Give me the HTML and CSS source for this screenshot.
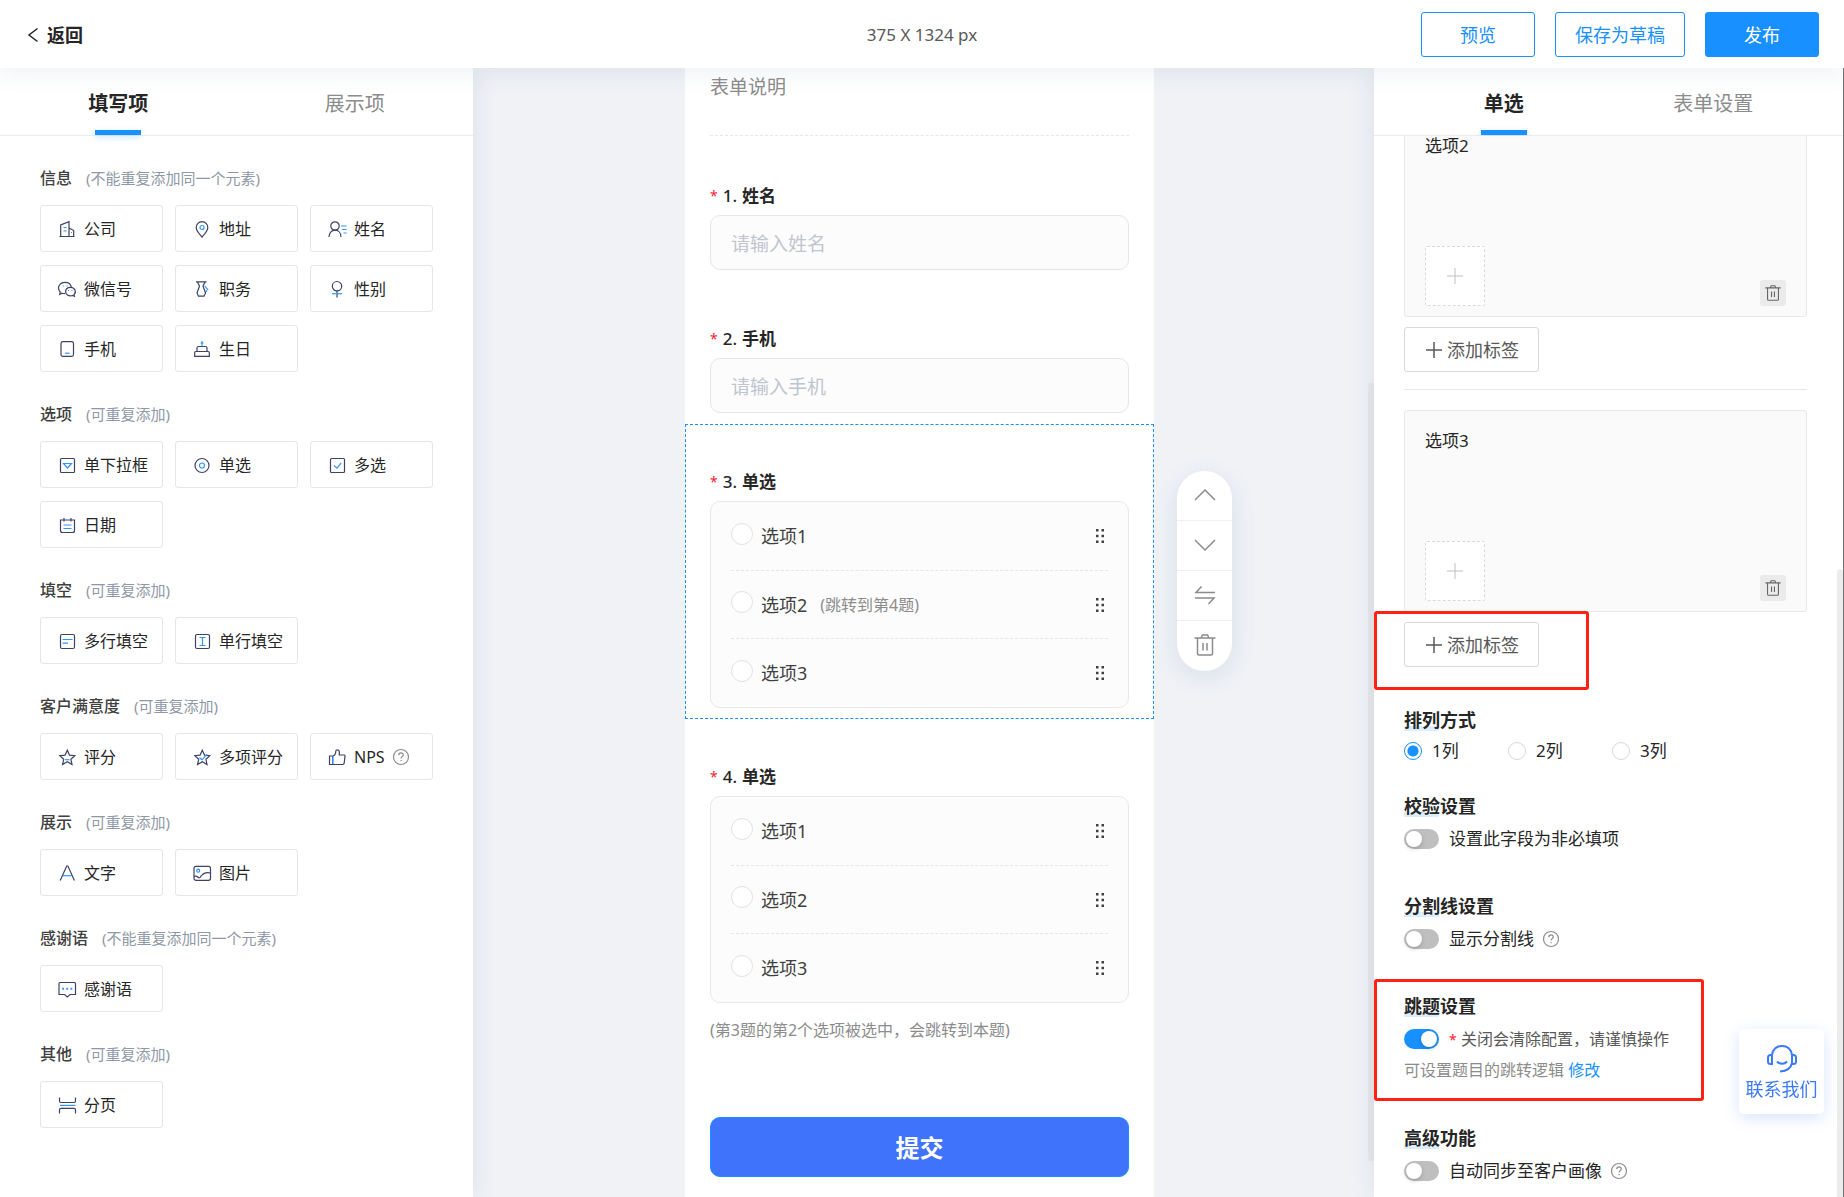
FILE: index.html
```html
<!DOCTYPE html>
<html lang="zh-CN">
<head>
<meta charset="utf-8">
<meta name="viewport" content="width=device-width, initial-scale=1">
<title>表单编辑</title>
<link rel="stylesheet" href="styles.css">
</head>
<body>
<svg class="sprite" aria-hidden="true">
  <symbol id="i-plus" viewBox="0 0 20 20"><path d="M10 2v16M2 10h16"/></symbol>
  <symbol id="i-help" viewBox="0 0 18 18"><circle cx="9" cy="9" r="7.5"/><path d="M6.8 7.2c0-3 4.5-2.900 4.500-.2 0 1.500-2.200 1.600-2.200 3.400M9.100 12v1.300"/></symbol>
  <symbol id="i-grip" viewBox="0 0 10 16"><path d="M1 1h2.500v2.500H1zM6.500 1H9v2.500H6.500zM1 6.800h2.500v2.500H1zM6.500 6.800H9v2.500H6.500zM1 12.500h2.500V15H1zM6.500 12.500H9V15H6.500z"/></symbol>
  <symbol id="i-trash" viewBox="0 0 22 24"><path d="M.5 5h21M7 5l1.500-3h5L15 5M3.500 5v15.500q0 1.500 1.500 1.500h12q1.500 0 1.500-1.500V5M9 10v7.500M13 10v7.500"/></symbol>
</svg>

<header class="topbar">
  <a class="back" href="#"><svg class="back-icon" viewBox="0 0 12 16"><path d="M10.500 1.500L2 8l8.500 6.500"/></svg>返回</a>
  <span class="canvas-size">375 X 1324 px</span>
  <div class="actions">
    <button class="btn" type="button">预览</button>
    <button class="btn" type="button">保存为草稿</button>
    <button class="btn btn-primary" type="button">发布</button>
  </div>
</header>

<main class="editor">
  <aside class="panel palette">
    <nav class="tabs">
      <button class="tab active" type="button">填写项</button>
      <button class="tab" type="button">展示项</button>
    </nav>
    <div class="groups">
      <section class="group">
        <h2 class="group-title">信息<small>(不能重复添加同一个元素)</small></h2>
        <div class="items">
          <button class="item" type="button"><svg class="icon" viewBox="0 0 20 20"><path d="M2.500 17.500h15M3.700 17.500V6L12 2.700v14.800M12 9l4.700 2.500v6"/><path class="b" d="M6.500 8.500h3M6.500 12h3M14 13.500h1"/></svg>公司</button>
          <button class="item" type="button"><svg class="icon" viewBox="0 0 20 20"><path d="M10 18C7 14.500 4.200 12 4.200 8.500a5.800 5.800 0 0 1 11.600 0C15.800 12 13 14.500 10 18z"/><circle class="b" cx="10" cy="8.500" r="2"/></svg>地址</button>
          <button class="item" type="button"><svg class="icon" viewBox="0 0 20 20"><circle cx="8" cy="7" r="4.200"/><path d="M2 18c0-4 2.500-6.800 6-6.800s6 2.800 6 6.800"/><path class="b" d="M14 7h5.500M15 10.500h4.500M16.500 14h3"/></svg>姓名</button>
          <button class="item" type="button"><svg class="icon" viewBox="0 0 20 20"><path d="M8 14.500c-1 .1-2 0-3-.3l-2.300 1.200.5-2.500C-.8 8.500 3 3.300 8 3.300c3.400 0 5.800 2.100 6.400 4.800"/><path d="M17 15.700l.4 1.600-1.800-.8c-4.500 1.300-7-1.400-7-4 0-2.300 2-4.200 4.700-4.200 4.800 0 6.400 4.700 3.700 7.400z"/><path class="b" d="M5.500 7h1.200M9.500 7h1.200M11 11.500h1M14.500 11.500h1"/></svg>微信号</button>
          <button class="item" type="button"><svg class="icon" viewBox="0 0 20 20"><path d="M4 2.800h10.500M5.500 3l2 4L5 14l1.500 3.200h5.500l1.500-3.200L11 7l2-4"/><path class="b" d="M12.500 7c1.500.5 1.800 2.500 3.700 4M13.800 11l1 2"/></svg>职务</button>
          <button class="item" type="button"><svg class="icon" viewBox="0 0 20 20"><circle cx="10" cy="7.200" r="4.700"/><path d="M10 12v6.500"/><path class="b" d="M5 14.700h10"/></svg>性别</button>
          <button class="item" type="button"><svg class="icon" viewBox="0 0 20 20"><rect x="4" y="2.700" width="12.500" height="14.600" rx="1.800"/><path class="b" d="M8 14.200h4.500"/></svg>手机</button>
          <button class="item" type="button"><svg class="icon" viewBox="0 0 20 20"><path d="M3.700 12.500h12.600q1 0 1 1v3.800H2.700v-3.800q0-1 1-1zM5 12.500V9q0-1.500 1.500-1.500h7Q15 7.500 15 9v3.500"/><path class="b" d="M10 2v5.500M8.700 4.200h2.600"/></svg>生日</button>
        </div>
      </section>
      <section class="group">
        <h2 class="group-title">选项<small>(可重复添加)</small></h2>
        <div class="items">
          <button class="item" type="button"><svg class="icon" viewBox="0 0 20 20"><rect x="3.500" y="3.500" width="14" height="14" rx="1"/><path class="b" d="M6.500 8.500h8l-4 4.500z"/></svg>单下拉框</button>
          <button class="item" type="button"><svg class="icon" viewBox="0 0 20 20"><circle cx="10" cy="10.500" r="7"/><circle class="b" cx="10" cy="10.500" r="2.500"/></svg>单选</button>
          <button class="item" type="button"><svg class="icon" viewBox="0 0 20 20"><rect x="3.500" y="3.500" width="14" height="14" rx="1"/><path class="b" d="M7 10.500l3 2.700 4.200-5.400"/></svg>多选</button>
          <button class="item" type="button"><svg class="icon" viewBox="0 0 20 20"><path d="M3.500 5h14v10.500q0 2-2 2h-10q-2 0-2-2zM7 3v3.500M14 3v3.500"/><path class="b" d="M6.500 10h8M6.500 13.500h8"/></svg>日期</button>
        </div>
      </section>
      <section class="group">
        <h2 class="group-title">填空<small>(可重复添加)</small></h2>
        <div class="items">
          <button class="item" type="button"><svg class="icon" viewBox="0 0 20 20"><rect x="3.500" y="3.500" width="14" height="14" rx="1.500"/><path class="b" d="M5.500 8.500h10M5.500 12.200h5.500"/></svg>多行填空</button>
          <button class="item" type="button"><svg class="icon" viewBox="0 0 20 20"><rect x="3.500" y="3.500" width="14" height="14" rx="1.500"/><path class="b" d="M7.500 6.500h6M7.500 14.500h6M10.500 6.500v8"/></svg>单行填空</button>
        </div>
      </section>
      <section class="group">
        <h2 class="group-title">客户满意度<small>(可重复添加)</small></h2>
        <div class="items">
          <button class="item" type="button"><svg class="icon" viewBox="0 0 20 20"><path d="M10.300 3.200l2.200 4.900 5.300.6-3.900 3.600 1.100 5.200-4.700-2.700-4.700 2.700 1.100-5.200-3.900-3.600 5.300-.6z"/><path class="b" d="M8 12.700h4.500"/></svg>评分</button>
          <button class="item" type="button"><svg class="icon" viewBox="0 0 20 20"><path d="M10.300 3.200l2.200 4.900 5.300.6-3.900 3.600 1.100 5.200-4.700-2.700-4.700 2.700 1.100-5.200-3.900-3.600 5.300-.6z"/><path class="b" d="M7.500 10.500l2.500 2.300 5-5.500"/></svg>多项评分</button>
          <button class="item" type="button"><svg class="icon" viewBox="0 0 20 20"><path d="M2.500 9h3.200v8.500H2.500zM5.700 9c2.300-.5 3-2.800 3.100-4.500 0-2.500 3.400-2.200 3.600.5l-.2 3h4.800q1.200 0 1 1.200l-.8 7q-.2 1.300-1.500 1.300h-10"/><path class="b" d="M5.700 9.500v7.500"/></svg>NPS<svg class="help" viewBox="0 0 18 18"><use href="#i-help"/></svg></button>
        </div>
      </section>
      <section class="group">
        <h2 class="group-title">展示<small>(可重复添加)</small></h2>
        <div class="items">
          <button class="item" type="button"><svg class="icon" viewBox="0 0 20 20"><path d="M3.200 17.500L9.700 3h1.200l6.500 14.500"/><path class="b" d="M5.800 12.700h9"/></svg>文字</button>
          <button class="item" type="button"><svg class="icon" viewBox="0 0 20 20"><rect x="2" y="3.300" width="16.500" height="14" rx="2"/><path d="M2 13.500c4-2 3.500 2.500 6 1 1.500-2.500 4-6 10.500-4.500"/><circle class="b" cx="6.200" cy="7.700" r="1.500"/></svg>图片</button>
        </div>
      </section>
      <section class="group">
        <h2 class="group-title">感谢语<small>(不能重复添加同一个元素)</small></h2>
        <div class="items">
          <button class="item" type="button"><svg class="icon" viewBox="0 0 20 20"><path d="M3 3.500h14.500q1 0 1 1v11h-5.500l-2.700 2.500-2.700-2.500H2v-11q0-1 1-1z"/><path class="b dots" d="M5.200 9.800h1.800M9.300 9.800h1.800M13.500 9.800h1.800"/></svg>感谢语</button>
        </div>
      </section>
      <section class="group">
        <h2 class="group-title">其他<small>(可重复添加)</small></h2>
        <div class="items">
          <button class="item" type="button"><svg class="icon" viewBox="0 0 20 20"><path d="M2.500 2.500V6q0 1.500 1.500 1.500h13q1.500 0 1.500-1.500V2.500M2.500 18.500v-3.700q0-1.500 1.500-1.500h13q1.500 0 1.500 1.500v3.700"/><path class="b" d="M3 10.400h15.500"/></svg>分页</button>
        </div>
      </section>
    </div>
  </aside>

  <section class="canvas">
    <form class="phone">
      <p class="form-desc">表单说明</p>
      <div class="question">
        <label class="q-title" for="q1"><i>*</i><b>1.</b>姓名</label>
        <input class="text-input" id="q1" type="text" placeholder="请输入姓名">
      </div>
      <div class="question">
        <label class="q-title" for="q2"><i>*</i><b>2.</b>手机</label>
        <input class="text-input" id="q2" type="text" placeholder="请输入手机">
      </div>
      <div class="question selected">
        <div class="q-title"><i>*</i><b>3.</b>单选</div>
        <div class="options">
          <div class="option"><label><input type="radio" name="q3">选项1</label><svg class="grip"><use href="#i-grip"/></svg></div>
          <div class="option"><label><input type="radio" name="q3">选项2 <small>(跳转到第4题)</small></label><svg class="grip"><use href="#i-grip"/></svg></div>
          <div class="option"><label><input type="radio" name="q3">选项3</label><svg class="grip"><use href="#i-grip"/></svg></div>
        </div>
        <div class="toolbar">
          <button type="button" aria-label="上移"><svg viewBox="0 0 24 24"><path d="M2 17L12 7l10 10"/></svg></button>
          <button type="button" aria-label="下移"><svg viewBox="0 0 24 24"><path d="M2 7l10 10L22 7"/></svg></button>
          <button type="button" aria-label="替换"><svg viewBox="0 0 24 24"><path d="M8.500 3.500L3 9.500h19M2 15h19l-5.500 6"/></svg></button>
          <button type="button" aria-label="删除"><svg viewBox="0 0 24 24"><use href="#i-trash"/></svg></button>
        </div>
      </div>
      <div class="question">
        <div class="q-title"><i>*</i><b>4.</b>单选</div>
        <div class="options">
          <div class="option"><label><input type="radio" name="q4">选项1</label><svg class="grip"><use href="#i-grip"/></svg></div>
          <div class="option"><label><input type="radio" name="q4">选项2</label><svg class="grip"><use href="#i-grip"/></svg></div>
          <div class="option"><label><input type="radio" name="q4">选项3</label><svg class="grip"><use href="#i-grip"/></svg></div>
        </div>
        <p class="q-note">(第3题的第2个选项被选中，会跳转到本题)</p>
      </div>
      <button class="submit" type="button">提交</button>
    </form>
    <span class="canvas-scroll"></span>
  </section>

  <aside class="panel settings">
    <nav class="tabs">
      <button class="tab active" type="button">单选</button>
      <button class="tab" type="button">表单设置</button>
    </nav>
    <div class="settings-view">
      <div class="settings-body">
        <div class="choice">
          <textarea aria-label="选项2">选项2</textarea>
          <div class="choice-foot">
            <button class="upload" type="button" aria-label="添加图片"><svg><use href="#i-plus"/></svg></button>
            <button class="remove" type="button" aria-label="删除选项"><svg><use href="#i-trash"/></svg></button>
          </div>
        </div>
        <div class="tag-row"><button class="add-tag" type="button"><svg><use href="#i-plus"/></svg>添加标签</button></div>
        <hr>
        <div class="choice">
          <textarea aria-label="选项3">选项3</textarea>
          <div class="choice-foot">
            <button class="upload" type="button" aria-label="添加图片"><svg><use href="#i-plus"/></svg></button>
            <button class="remove" type="button" aria-label="删除选项"><svg><use href="#i-trash"/></svg></button>
          </div>
        </div>
        <div class="tag-row"><button class="add-tag" type="button"><svg><use href="#i-plus"/></svg>添加标签</button><span class="mark mark-tag"></span></div>

        <section class="setting layout">
          <h3>排列方式</h3>
          <div class="columns">
            <label><input type="radio" name="cols" checked>1列</label>
            <label><input type="radio" name="cols">2列</label>
            <label><input type="radio" name="cols">3列</label>
          </div>
        </section>
        <section class="setting">
          <h3>校验设置</h3>
          <label class="row"><input class="switch" type="checkbox">设置此字段为非必填项</label>
        </section>
        <section class="setting">
          <h3>分割线设置</h3>
          <label class="row"><input class="switch" type="checkbox">显示分割线<svg class="help" viewBox="0 0 18 18"><use href="#i-help"/></svg></label>
        </section>
        <section class="setting">
          <h3>跳题设置</h3>
          <label class="row warn"><input class="switch" type="checkbox" checked><span><i>*</i> 关闭会清除配置，请谨慎操作</span></label>
          <p class="tip">可设置题目的跳转逻辑 <a href="#">修改</a></p>
          <span class="mark mark-jump"></span>
        </section>
        <section class="setting">
          <h3>高级功能</h3>
          <label class="row"><input class="switch" type="checkbox">自动同步至客户画像<svg class="help" viewBox="0 0 18 18"><use href="#i-help"/></svg></label>
        </section>
      </div>
      <span class="panel-scroll"></span>
    </div>
  </aside>
</main>

<button class="contact" type="button">
  <svg viewBox="0 0 30 28"><path d="M5 10C6 4 10 1 15 1s9 3 10 9v8c-1 5-5 8-12 8.500M5 10v9H3.500Q1 19 1 16.500v-4Q1 10 3.500 10zM25 10v9h1.500q2.500 0 2.500-2.500v-4Q29 10 26.500 10zM10 16.500c2.500 3 7.500 3 10 0"/></svg>
  联系我们
</button>
</body>
</html>
```

FILE: styles.css
```css
* {
  box-sizing: border-box;
}

body {
  display: flex;
  flex-direction: column;
  height: 100vh;
  margin: 0;
  overflow: hidden;
  background: #f0f2f6;
  color: #262626;
  font: 17px/26px "Noto Sans", "Noto Sans CJK SC", sans-serif;
}

button,
input,
textarea {
  margin: 0;
  padding: 0;
  font: inherit;
  color: inherit;
}

button {
  border: 0;
  background: none;
  cursor: pointer;
}

h2,
h3,
p {
  margin: 0;
}

a {
  color: #1890ff;
  text-decoration: none;
}

i {
  color: #f5222d;
  font-size: 14px;
  font-style: normal;
  font-weight: 400;
}

svg {
  flex: none;
  fill: none;
  stroke: currentColor;
}

.sprite {
  display: none;
}

/* Top bar */
.topbar {
  position: relative;
  z-index: 3;
  display: grid;
  grid-template-columns: 1fr auto 1fr;
  align-items: center;
  flex: none;
  height: 68px;
  padding: 1px 25px 0;
  background: #fff;
  box-shadow: 0 4px 24px rgba(70, 110, 150, 0.1);
}

.back {
  display: flex;
  align-items: center;
  gap: 7px;
  padding-left: 1px;
  color: #262626;
  font-size: 18px;
  font-weight: 700;
}

.back-icon {
  width: 14px;
  height: 16px;
  stroke-width: 1.5;
}

.canvas-size {
  color: #595959;
}

.actions {
  display: flex;
  justify-content: flex-end;
  gap: 20px;
}

.btn {
  min-width: 114px;
  height: 45px;
  padding: 0 19px;
  border: 1px solid #1890ff;
  border-radius: 3px;
  background: #fff;
  color: #1890ff;
  font-size: 18px;
}

.btn-primary {
  background: #1890ff;
  color: #fff;
}

/* Page columns */
.editor {
  display: grid;
  grid-template-columns: 473px 1fr 470px;
  flex: 1;
  min-height: 0;
}

.panel {
  z-index: 2;
  display: flex;
  flex-direction: column;
  min-height: 0;
  background: #fff;
  box-shadow: 0 0 25px rgba(70, 100, 150, 0.12);
}

.tabs {
  display: flex;
  flex: none;
  height: 68px;
  border-bottom: 1px solid #ebedf0;
}

.tab {
  display: flex;
  flex: 1;
  flex-direction: column;
  align-items: center;
  padding-top: 21px;
  color: #8c8c8c;
  font-size: 20px;
  line-height: 30px;
}

.tab.active {
  color: #262626;
  font-weight: 700;
}

.tab.active::after {
  width: 46px;
  height: 5px;
  margin-top: 11px;
  background: #1890ff;
  box-shadow: 0 2px 6px rgba(24, 144, 255, 0.25);
  content: "";
}

/* Element palette */
.groups {
  display: flex;
  flex-direction: column;
  gap: 30px;
  padding: 30px 40px;
}

.group-title {
  display: flex;
  align-items: center;
  gap: 14px;
  margin-bottom: 15px;
  color: #404040;
  font-size: 16px;
  font-weight: 500;
  line-height: 24px;
}

.group-title small {
  color: #8f98a6;
  font-size: 15px;
  font-weight: 400;
}

.items {
  display: grid;
  grid-template-columns: repeat(3, 1fr);
  gap: 13px 12px;
}

.item {
  display: flex;
  align-items: center;
  gap: 7px;
  height: 47px;
  padding: 0 10px 0 16px;
  border: 1px solid #e6e6e6;
  border-radius: 3px;
  font-size: 16px;
  white-space: nowrap;
}

.icon {
  width: 20px;
  height: 20px;
  stroke: #3f4266;
  stroke-width: 1.2;
}

.icon .b {
  stroke: #2f95ff;
}

.icon .dots {
  stroke-width: 2;
}

.help {
  width: 18px;
  height: 18px;
  color: #8c8c8c;
  stroke-width: 1.2;
}

/* Form preview */
.canvas {
  position: relative;
  display: flex;
  justify-content: center;
  min-height: 0;
  padding-right: 8px;
}

.phone {
  width: 469px;
  padding: 5px 0 60px;
  background: #fff;
}

.form-desc {
  margin: 0 25px 2px;
  padding-bottom: 34px;
  border-bottom: 1px dashed #e6e6e6;
  color: #8c8c8c;
  font-size: 19px;
  line-height: 28px;
}

.question {
  position: relative;
  padding: 46px 25px 11px;
}

.selected::before {
  position: absolute;
  inset: 0;
  border: 1px dashed #1890ff;
  content: "";
  pointer-events: none;
}

.q-title {
  display: flex;
  gap: 5px;
  margin-bottom: 7px;
  font-weight: 700;
  line-height: 24px;
}

.q-title b {
  font-weight: 500;
}

.text-input {
  display: block;
  width: 100%;
  height: 55px;
  padding: 2px 20px 0;
  border: 1px solid #e6e6e6;
  border-radius: 10px;
  background: #fcfcfc;
  font-size: 19px;
}

.text-input::placeholder {
  color: #bfc5cf;
}

.options {
  padding: 0 20px;
  border: 1px solid #e8e8e8;
  border-radius: 10px;
  background: #fcfcfc;
}

.option {
  display: flex;
  align-items: center;
  justify-content: space-between;
  height: 68px;
  padding-right: 3px;
  color: #404040;
  font-size: 18px;
}

.option + .option {
  border-top: 1px dashed #e6e6e6;
}

.option:last-child {
  height: 69px;
}

.option label {
  display: flex;
  align-items: center;
  gap: 8px;
}

.option small {
  margin-left: 5px;
  color: #8c8c8c;
  font-size: 16px;
}

.option input {
  width: 22px;
  height: 22px;
  margin-bottom: 5px;
  border: 1px solid #e2e2e2;
  border-radius: 50%;
  background: #fff;
  appearance: none;
}

.grip {
  width: 10px;
  height: 16px;
  fill: #404040;
  stroke: none;
}

.q-note {
  margin-top: 15px;
  margin-bottom: -11px;
  color: #8c8c8c;
  font-size: 16px;
  line-height: 24px;
}

.submit {
  display: block;
  width: calc(100% - 50px);
  height: 60px;
  margin: 75px 25px 0;
  padding-top: 2px;
  border: 1px solid #1890ff;
  border-radius: 10px;
  background: #4073fc;
  color: #fff;
  font-size: 24px;
  font-weight: 700;
}

.toolbar {
  position: absolute;
  top: 47px;
  left: calc(100% + 23px);
  display: flex;
  flex-direction: column;
  width: 55px;
  border-radius: 28px;
  background: #fff;
  box-shadow: 0 6px 24px rgba(70, 110, 160, 0.14);
}

.toolbar button {
  display: grid;
  place-items: center;
  height: 50px;
  padding-bottom: 2px;
  border-bottom: 1px solid #f0f0f0;
  color: #8c8c8c;
}

.toolbar button:last-child {
  border-bottom: 0;
}

.toolbar svg {
  width: 24px;
  height: 24px;
  stroke-width: 1.5;
}

.canvas-scroll {
  position: absolute;
  top: 315px;
  right: 0;
  bottom: 36px;
  width: 6px;
  border-radius: 3px;
  background: #e6e7e9;
}

/* Field settings */
.settings {
  border-right: 1px solid #737373;
}

.settings .tabs {
  padding: 0 25px;
}

.settings-view {
  position: relative;
  flex: 1;
  min-height: 0;
  overflow: hidden;
}

/* The list is scrolled so that the second option meets the tab bar. */
.settings-body {
  margin-top: -21px;
  padding: 0 36px 0 30px;
}

.choice {
  height: 202px;
  padding: 17px 20px 10px;
  border: 1px solid #e8e8e8;
  border-radius: 3px;
  background: #fafafa;
}

.choice textarea {
  display: block;
  width: 100%;
  height: 113px;
  border: 0;
  outline: 0;
  background: transparent;
  resize: none;
}

.choice-foot {
  display: flex;
  align-items: flex-end;
  justify-content: space-between;
}

.upload {
  display: grid;
  place-items: center;
  width: 60px;
  height: 60px;
  border: 1px dashed #d9d9d9;
  border-radius: 2px;
  background: #fff;
  color: #bfbfbf;
}

.upload svg,
.add-tag svg {
  width: 20px;
  height: 20px;
}

.remove {
  display: grid;
  place-items: center;
  width: 26px;
  height: 26px;
  border-radius: 3px;
  background: #ebebeb;
  color: #666;
}

.remove svg {
  width: 16px;
  height: 18px;
  stroke-width: 1.5;
}

.tag-row {
  position: relative;
  padding-top: 10px;
}

.add-tag {
  display: flex;
  align-items: center;
  justify-content: center;
  gap: 3px;
  width: 135px;
  height: 45px;
  border: 1px solid #d9d9d9;
  border-radius: 3px;
  background: #fff;
  color: #595959;
  font-size: 18px;
}

.add-tag svg {
  stroke-width: 1.5;
}

hr {
  margin: 17px 0 20px;
  border: 0;
  border-top: 1px solid #e8e8e8;
}

.setting {
  position: relative;
  margin-top: 39px;
}

.setting.layout {
  margin-top: 40px;
  margin-bottom: -10px;
}

.setting h3 {
  margin-bottom: 5px;
  background: linear-gradient(#dbeeff, #dbeeff) 0 19px / 35px 5px no-repeat;
  font-size: 18px;
  font-weight: 700;
}

.columns {
  display: flex;
}

.columns label {
  display: flex;
  align-items: center;
  gap: 10px;
  width: 104px;
}

.columns input {
  width: 18px;
  height: 18px;
  border: 1px solid #d9d9d9;
  border-radius: 50%;
  background: #fff;
  appearance: none;
}

.columns input:checked {
  border-color: #1890ff;
  background: radial-gradient(#1890ff 5px, #fff 6px);
}

.row {
  display: flex;
  align-items: center;
  height: 30px;
}

.row .help {
  margin-left: 8px;
}

.switch {
  display: flex;
  flex: none;
  width: 35px;
  height: 20px;
  margin-right: 10px;
  padding: 2px;
  border-radius: 10px;
  background: #bfbfbf;
  appearance: none;
}

.switch::before {
  width: 16px;
  height: 16px;
  border-radius: 50%;
  background: #fff;
  box-shadow: 0 2px 4px rgba(0, 35, 11, 0.2);
  content: "";
}

.switch:checked {
  justify-content: flex-end;
  background: #1890ff;
}

.warn {
  color: #595959;
  font-size: 16px;
}

.tip {
  color: #8c8c8c;
  font-size: 16px;
  line-height: 32px;
}

.mark {
  position: absolute;
  border: 3px solid #ff2112;
  border-radius: 3px;
  pointer-events: none;
}

.mark-tag {
  top: -1px;
  left: -30px;
  width: 215px;
  height: 79px;
}

.mark-jump {
  top: -14px;
  left: -30px;
  width: 330px;
  height: 122px;
}

.panel-scroll {
  position: absolute;
  top: 433px;
  right: 0;
  bottom: 0;
  width: 6px;
  border-radius: 3px 3px 0 0;
  background: #ececec;
}

.contact {
  position: fixed;
  right: 20px;
  bottom: 83px;
  z-index: 4;
  display: flex;
  flex-direction: column;
  align-items: center;
  justify-content: center;
  gap: 3px;
  width: 85px;
  height: 85px;
  padding-top: 4px;
  border-radius: 5px;
  background: #fff;
  box-shadow: 0 4px 16px rgba(60, 120, 250, 0.2);
  color: #3b7bfb;
  font-size: 18px;
}

.contact svg {
  width: 30px;
  height: 28px;
  stroke-width: 2;
}
```
